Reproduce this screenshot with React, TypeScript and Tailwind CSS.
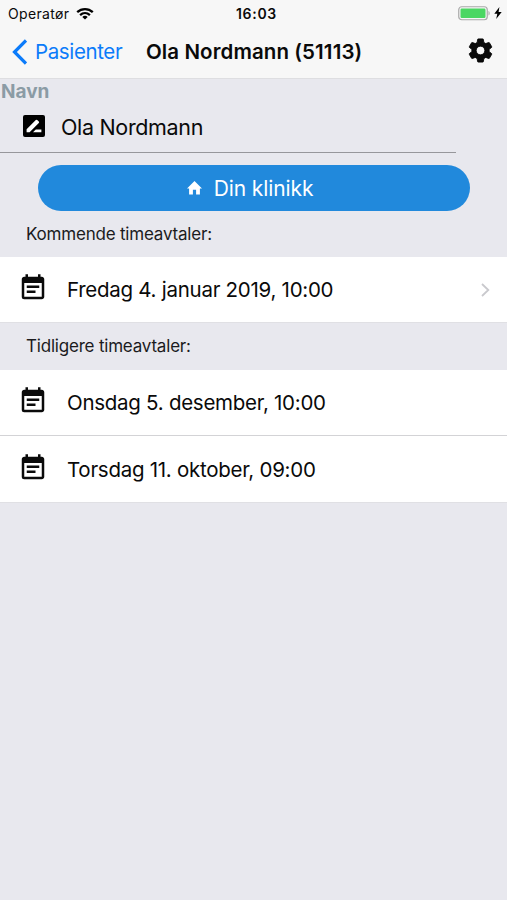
import React from 'react';
import { MdEventNote, MdSettings } from 'react-icons/md';

interface Appointment {
  id: number;
  label: string;
}

const upcoming: Appointment[] = [{ id: 1, label: 'Fredag 4. januar 2019, 10:00' }];

const previous: Appointment[] = [
  { id: 2, label: 'Onsdag 5. desember, 10:00' },
  { id: 3, label: 'Torsdag 11. oktober, 09:00' },
];

const StatusBar: React.FC = () => (
  <div className="relative flex h-[27px] items-center justify-between pl-2 pr-[5px]">
    <div className="flex items-center gap-[7px]">
      <span className="text-[14px] tracking-[0.35px]">Operatør</span>
      <svg width="18" height="13" viewBox="0 0 18 13" fill="none" stroke="#000" strokeWidth="2.3" className="-mt-px">
        <path d="M1.2 5.2C5.7 1 12.3 1 16.8 5.2" />
        <path d="M4.1 8.1C7 5.5 11 5.5 13.9 8.1" />
        <path d="M9 12.6L6.3 9.9C7.9 8.5 10.1 8.5 11.7 9.9Z" fill="#000" stroke="none" />
      </svg>
    </div>
    <span className="absolute left-[236px] text-[14px] font-semibold tracking-[0.7px]">16:03</span>
    <div className="flex items-center gap-[3px]">
      <svg width="33" height="15" viewBox="0 0 33 15">
        <rect x="0.75" y="0.75" width="28.5" height="13" rx="3" fill="#f7f7f7" stroke="#a9a9a9" strokeWidth="1.2" />
        <rect x="2.5" y="2.5" width="25" height="9.5" rx="1.2" fill="#4bd763" />
        <path d="M30.5 5v4.6c1.6-.6 1.6-4 0-4.6z" fill="#a9a9a9" />
      </svg>
      <svg width="8" height="12" viewBox="0 0 8 12" className="-mt-px">
        <path d="M5.4 0L0.3 6.7h3L2.2 12l5.5-7H4.6z" fill="#000" />
      </svg>
    </div>
  </div>
);

const NavBar: React.FC = () => (
  <div className="relative flex h-[51px] items-center justify-between pl-[12px] pr-[12px]">
    <button className="-mt-px flex items-center gap-2 text-[#0b7bfa]">
      <svg width="15" height="26" viewBox="0 0 15 26" fill="none" stroke="currentColor" strokeWidth="3.2">
        <path d="M14 1.5L2.5 13L14 24.5" />
      </svg>
      <span className="pt-px text-[20.5px] tracking-[-0.37px]">Pasienter</span>
    </button>
    <h1 className="absolute left-[146px] whitespace-nowrap text-[20.5px] font-semibold tracking-[0.1px]">
      Ola Nordmann (51113)
    </h1>
    <button className="-mt-[5px]">
      <MdSettings size={29} stroke="#000" strokeWidth={0.7} className="[&>path:first-child]:stroke-none" />
    </button>
  </div>
);

const NameField: React.FC = () => (
  <div className="h-[74px] w-[456px] border-b border-[#97979b]">
    <label className="block h-[25px] pl-[1px] pt-px text-[19px] font-bold leading-[24px] text-[#8b9ba5]">Navn</label>
    <div className="flex h-[45px] items-center pl-[23px]">
      <svg width="22" height="22" viewBox="0 0 22 22" className="-mt-px">
        <rect width="22" height="22" rx="2" fill="#000" />
        <path d="M3.6 17.2v-3l9.2-9.2q.7-.6 1.4 0l1.6 1.6q.7.7 0 1.4L6.6 17.2z" fill="#fff" />
        <path d="M10 17.2l2.8-2.8h5.6v2.8z" fill="#fff" />
      </svg>
      <span className="ml-4 mt-[2px] text-[21.5px] tracking-[-0.33px]">Ola Nordmann</span>
    </div>
  </div>
);

const SectionHeader: React.FC<{ title: string }> = ({ title }) => (
  <h2 className="flex h-[47px] items-center pl-[26px] text-[17px] tracking-[-0.2px] text-[#1b1b1d]">{title}</h2>
);

const AppointmentRow: React.FC<{ item: Appointment; chevron?: boolean }> = ({ item, chevron }) => (
  <li className="flex h-[66px] items-center border-b border-[#d3d3d6] bg-white pl-[18px] pr-[17px] last:border-[#e0e0e4] [&:nth-child(2)]:h-[67px] [&:nth-child(2)]:pt-px">
    <MdEventNote size={30} className="-mt-[3px]" />
    <span className="ml-[19px] mt-px flex-1 text-[20.5px] tracking-[-0.27px]">{item.label}</span>
    {chevron && (
      <svg width="9" height="14" viewBox="0 0 9 14" fill="none" stroke="#c9c9cd" strokeWidth="1.8">
        <path d="M1 1l6.3 6L1 13" />
      </svg>
    )}
  </li>
);

const App: React.FC = () => {
  return (
    <div className="h-[900px] w-[507px] overflow-hidden bg-[#e8e8ee] font-['Inter',sans-serif] text-[#0a0a0a]">
      <header className="h-[79px] border-b border-[#dedee1] bg-[#f7f7f7]">
        <StatusBar />
        <NavBar />
      </header>

      <main>
        <NameField />

        {/* Clinic button */}
        <button className="ml-[38px] mt-3 flex h-[46px] w-[432px] items-center justify-center gap-3 rounded-full bg-[#2189dc] pr-[8px] text-white">
          <svg width="15" height="14" viewBox="0 0 15 14" fill="currentColor" className="-mt-px">
            <path d="M7.5 0L0 7.4h2.1V13.5h3.8V8.7h3.2v4.8h3.8V7.4H15z" />
          </svg>
          <span className="mt-px text-[21px] tracking-[-0.1px]">Din klinikk</span>
        </button>

        <SectionHeader title="Kommende timeavtaler:" />
        <ul className="-mt-px">
          {upcoming.map((item) => (
            <AppointmentRow key={item.id} item={item} chevron />
          ))}
        </ul>

        <SectionHeader title="Tidligere timeavtaler:" />
        <ul>
          {previous.map((item) => (
            <AppointmentRow key={item.id} item={item} />
          ))}
        </ul>
      </main>
    </div>
  );
};

export default App;
